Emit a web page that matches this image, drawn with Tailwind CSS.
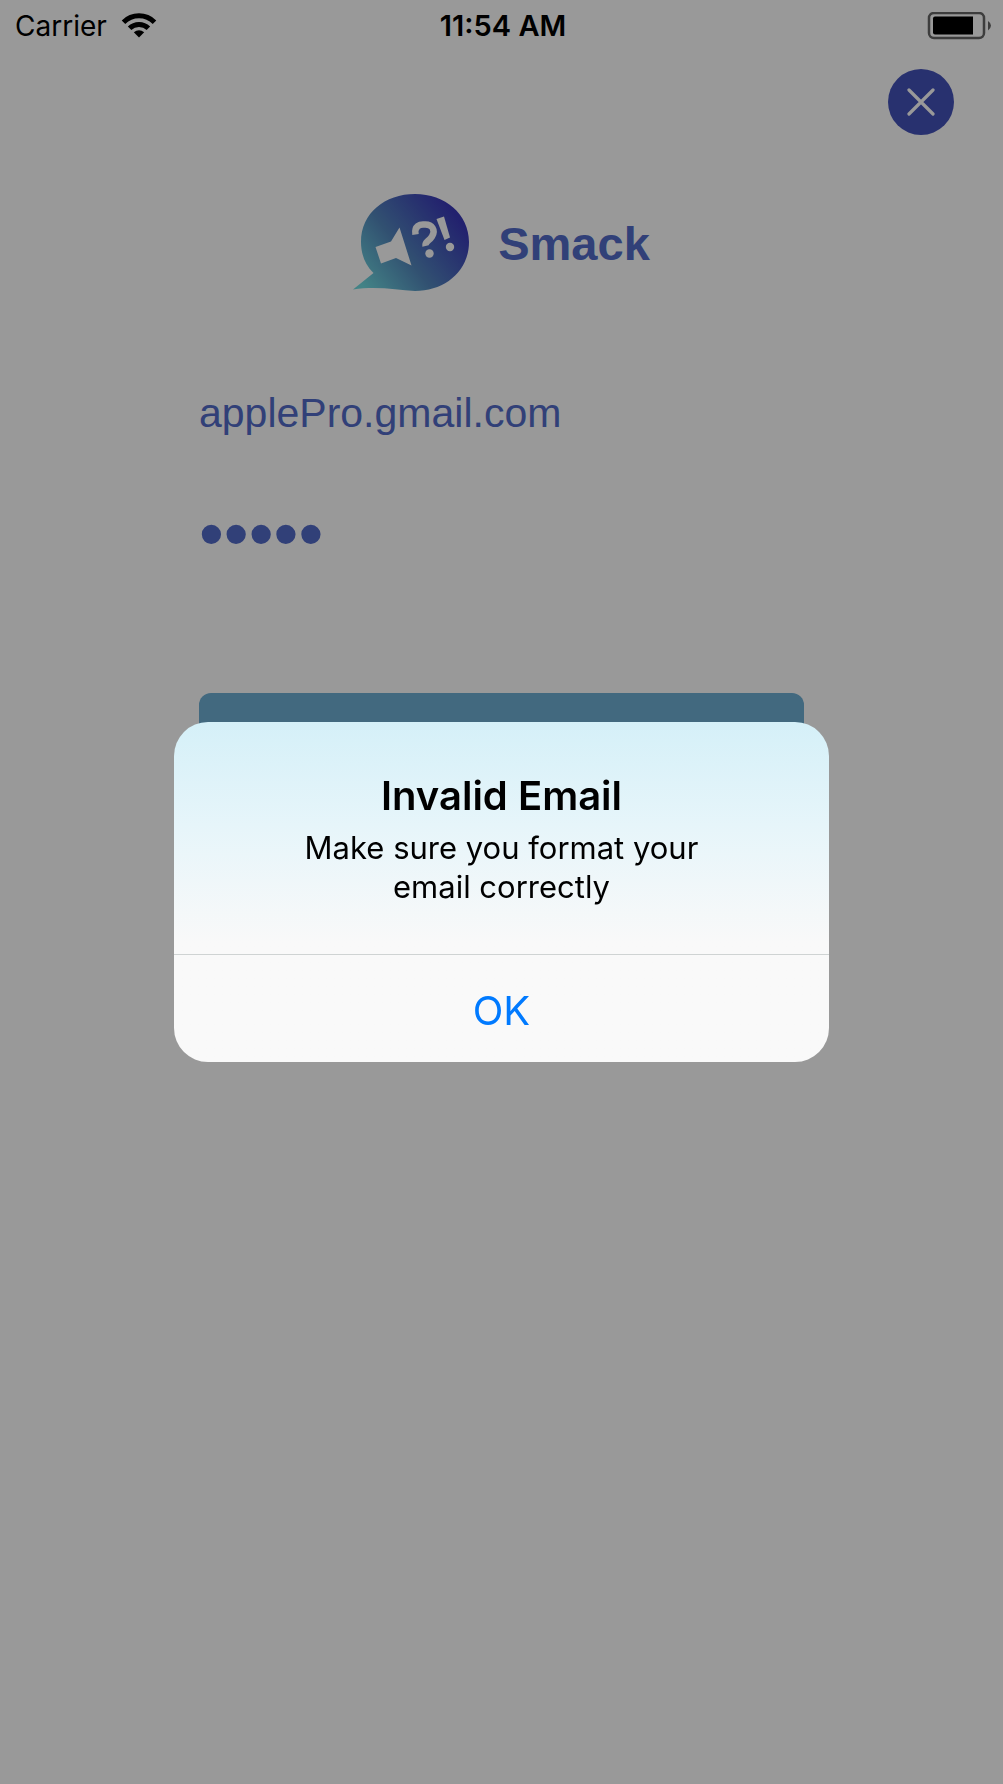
<!DOCTYPE html>
<html lang="en">
<head>
<meta charset="utf-8">
<meta name="viewport" content="width=device-width, initial-scale=1">
<title>Smack – Login</title>
<script src="https://cdn.jsdelivr.net/npm/@tailwindcss/browser@4"></script>
</head>
<body class="min-h-screen bg-white font-[Inter,sans-serif] text-black">

<header class="grid h-[51px] grid-cols-3 items-center pr-3 pl-[15px] text-[28px] leading-8">
  <div class="flex items-center gap-3.5">
    <span>Carrier</span>
    <svg class="h-[26px] w-[36px]" viewBox="0 0 36 26" fill="none" stroke="#000" stroke-width="5" aria-label="Wi-Fi">
      <path d="M2.500 9.200A22 22 0 0 1 33.500 9.200"/>
      <path d="M8.600 15.200A13.500 13.500 0 0 1 27.400 15.200"/>
      <path d="M12.800 19.300Q18 15.400 23.200 19.300L18 24.500Z" fill="#000" stroke="none"/>
    </svg>
  </div>
  <time class="text-center text-[29px] font-semibold whitespace-nowrap">11:54 AM</time>
  <svg class="h-7 w-16 justify-self-end" viewBox="0 0 64 28" aria-label="Battery">
    <rect x="2" y="1" width="55" height="25" rx="5" fill="none" stroke="#666" stroke-width="2.500"/>
    <path d="M8 4.500H46V22.500H8Q6 22.500 6 20.500V6.500Q6 4.500 8 4.500Z"/>
    <path d="M61 9Q64 11 64 13.500Q64 16 61 18.500Z" fill="#666"/>
  </svg>
</header>

<div class="flex justify-end pt-[18px] pr-[49px]">
  <button type="button" aria-label="Close" class="size-[66px] rounded-full bg-[#4452b9] p-[19px]">
    <svg class="size-7" viewBox="0 0 28 28" stroke="#fff" stroke-width="3.200" stroke-linecap="round"><path d="M2 2L26 26M26 2L2 26"/></svg>
  </button>
</div>

<main class="mx-auto w-[605px] max-w-[90%]">
  <h1 class="mt-[57px] flex items-center justify-center gap-7 font-['Liberation_Sans',sans-serif] text-[47px] leading-14 font-bold text-[#536bc8]">
    <svg class="h-[100px] w-[117px]" viewBox="0 0 117 100" aria-hidden="true">
      <defs>
        <linearGradient id="bubble" x1="8" y1="92" x2="100" y2="20" gradientUnits="userSpaceOnUse">
          <stop offset="0" stop-color="#70dbe0"/>
          <stop offset="0.450" stop-color="#5387bd"/>
          <stop offset="1" stop-color="#3a38b8"/>
        </linearGradient>
      </defs>
      <path fill="url(#bubble)" d="M0 97.500L20.500 81C11.500 72.500 8 61 8 50C8 21 32 2 62 2C92 2 116 22 116 50C116 79 92 99 62 99C44 98 24 94 0 97.500Z"/>
      <g fill="#fff">
        <path d="M22.500 55L38 49.500L46.500 35.500L58.500 73.500L43 66L28 71.500Z"/>
        <path d="M62.500 42.500C61 34 67 32 71.500 32.500C79 32 83 38 79 44.500C76 49.500 71.500 49.500 72.500 54" fill="none" stroke="#fff" stroke-width="6.500"/>
        <circle cx="76.500" cy="61.500" r="4.200"/>
        <path d="M83.500 27L91 24.500L97 45.500L91.500 48Z"/>
        <circle cx="97" cy="55" r="4.200"/>
      </g>
    </svg>
    <span class="pt-1">Smack</span>
  </h1>

  <form class="mt-[92px] flex flex-col font-['Liberation_Sans',sans-serif] text-[#536bc8]">
    <input type="email" aria-label="Email" value="applePro.gmail.com" class="h-[60px] text-[41px] outline-none">
    <input type="password" aria-label="Password" value="smack" class="mt-[59px] h-[60px] text-[71px] leading-[60px] outline-none">
    <button type="button" aria-label="Login" class="mt-[130px] h-[100px] rounded-[12px] bg-[#6eafd4]"></button>
  </form>
</main>

<div class="fixed inset-0 flex items-center justify-center bg-black/40">
  <section role="alertdialog" aria-modal="true" aria-labelledby="alert-title" aria-describedby="alert-text" class="flex w-[655px] max-w-[90%] flex-col overflow-hidden rounded-[34px] bg-[#f9f9f9] bg-linear-to-b from-[#d5f0f8] via-[#e6f5fa] via-30% to-[#f9f9f9] to-65% text-center">
    <div class="px-24 pt-12 pb-12">
      <h2 id="alert-title" class="text-[40px] leading-[52px] font-semibold">Invalid Email</h2>
      <p id="alert-text" class="mx-auto mt-1.5 max-w-[420px] text-[31px] leading-[39px]">Make sure you format your email correctly</p>
    </div>
    <button type="button" class="border-t border-[#cfd3d3] pt-1 text-[40px] leading-[103px] text-[#007aff]">OK</button>
  </section>
</div>

</body>
</html>
